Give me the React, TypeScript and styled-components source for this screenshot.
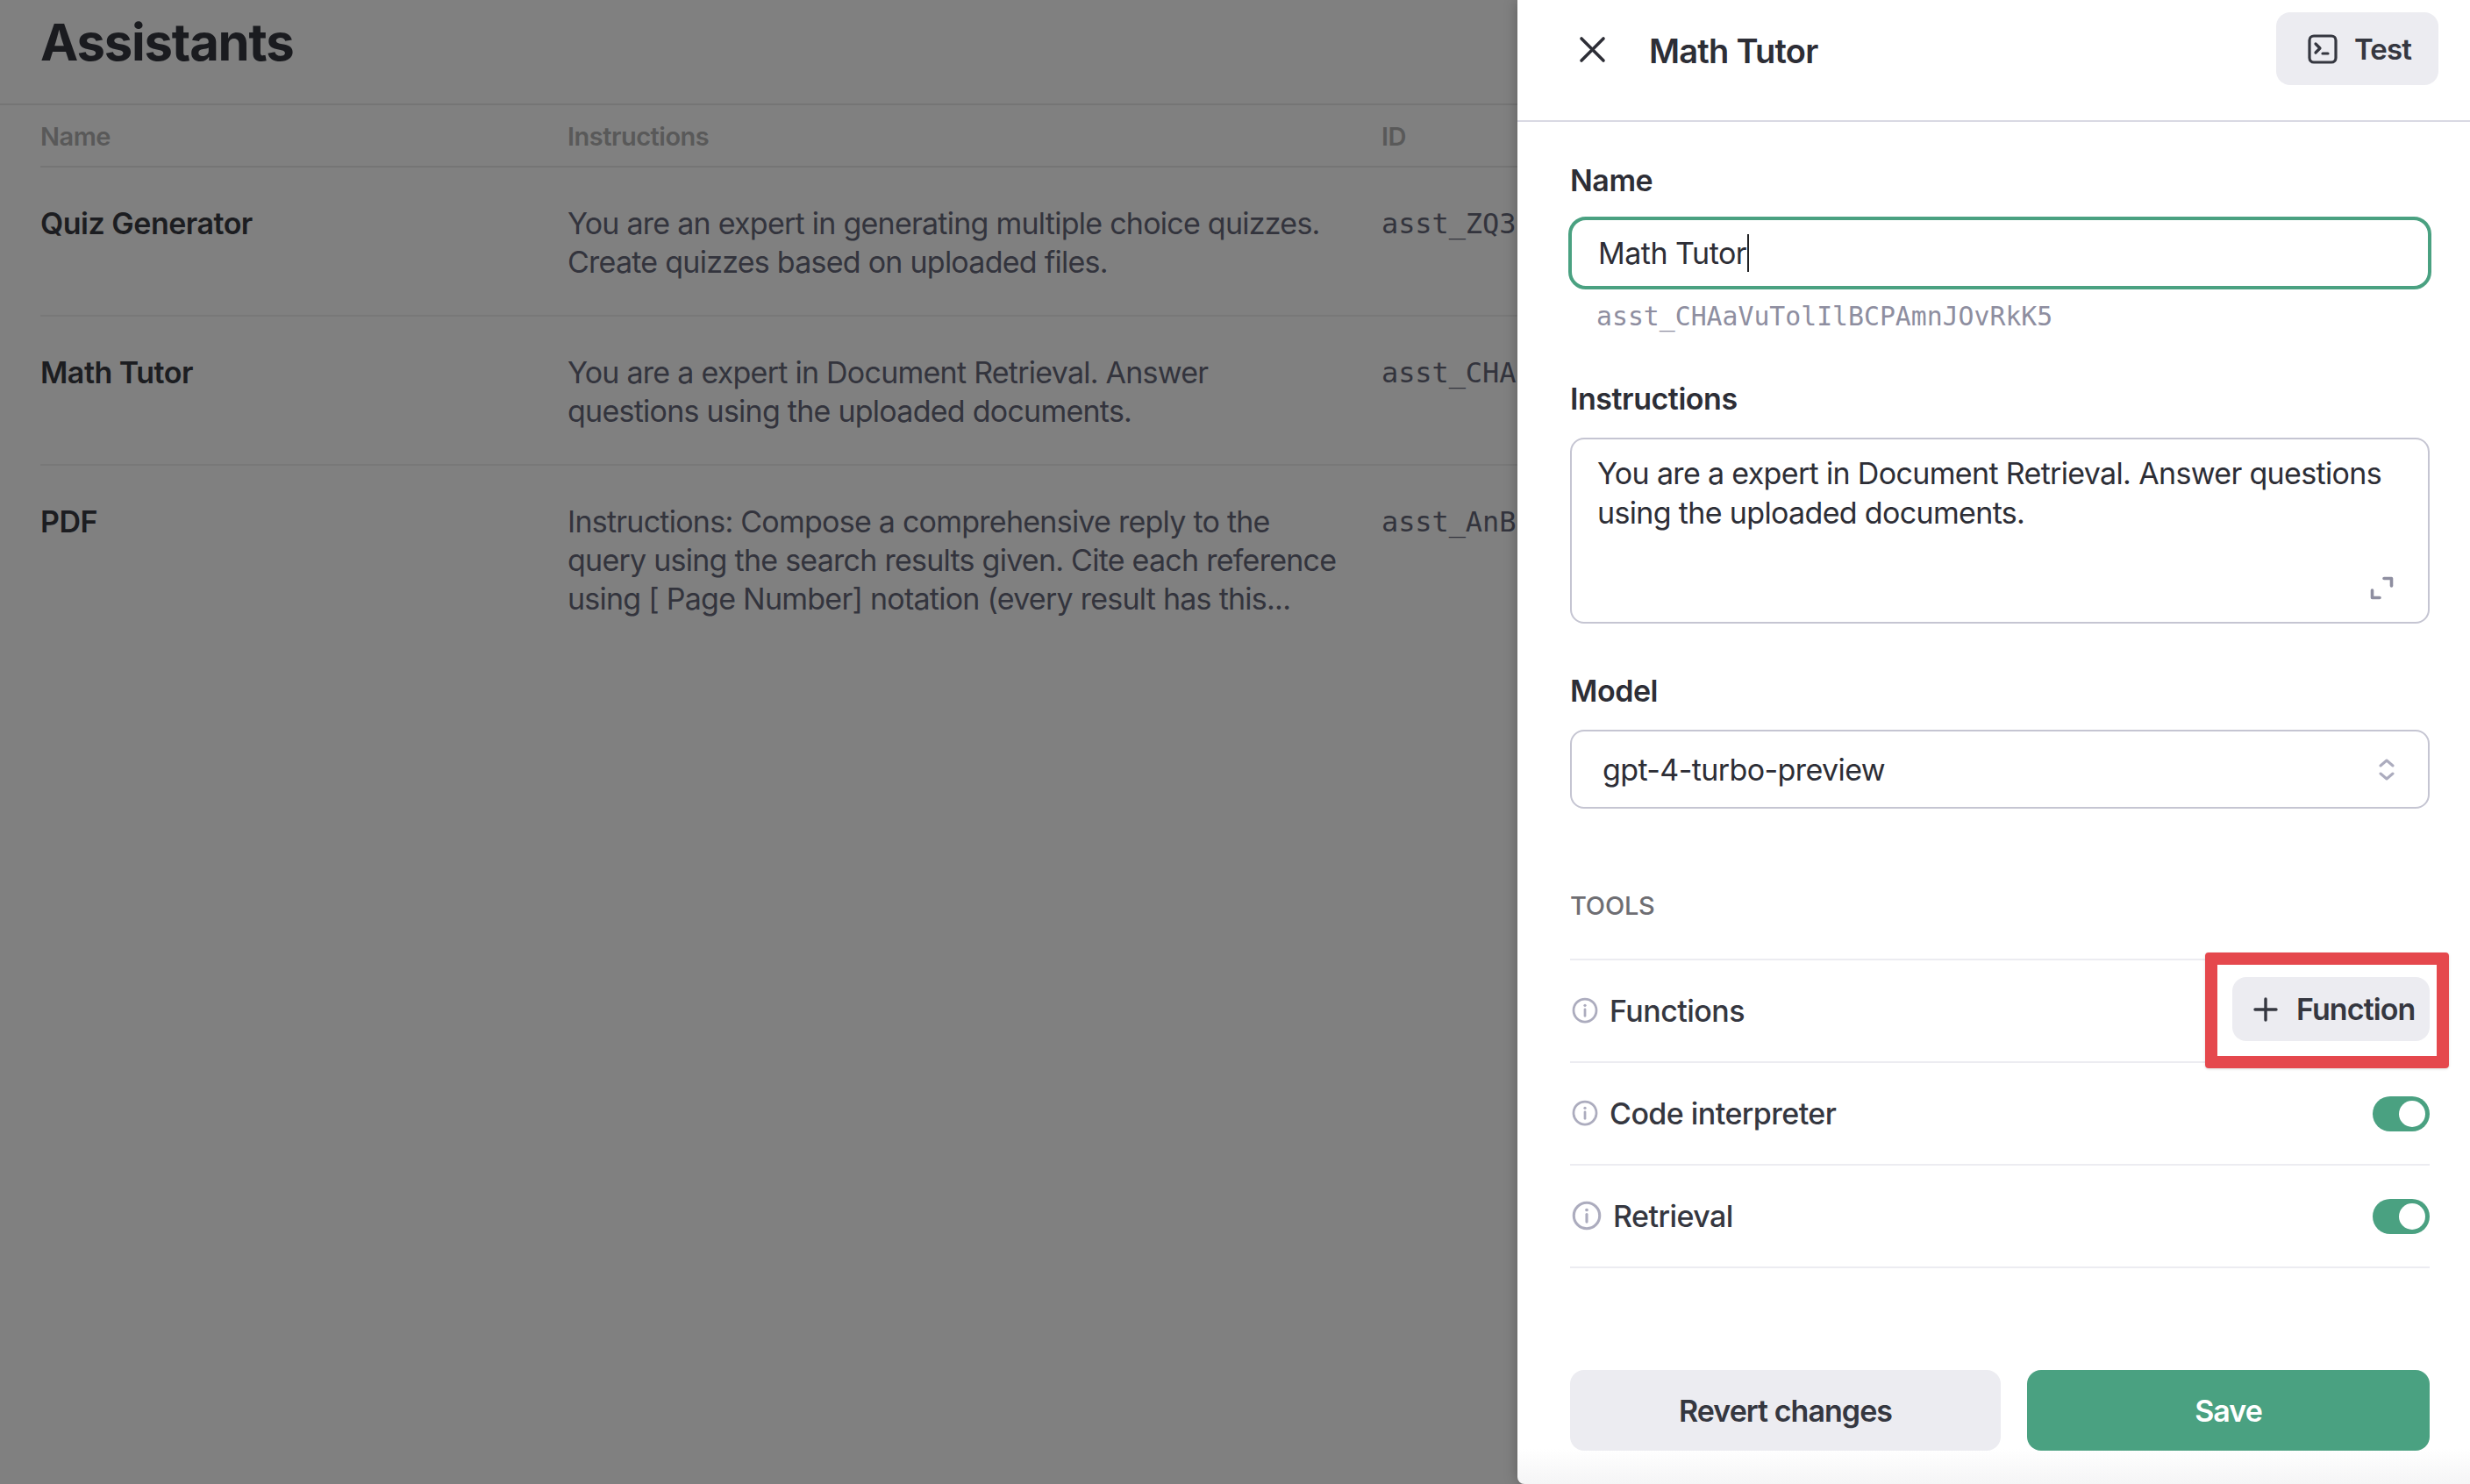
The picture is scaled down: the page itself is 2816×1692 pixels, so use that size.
import React from "react";
import styled, { createGlobalStyle } from "styled-components";

const Global = createGlobalStyle`
  html, body { margin: 0; padding: 0; background: #808080; }
  body { font-family: Inter, "Liberation Sans", sans-serif; -webkit-font-smoothing: antialiased; }
  * { box-sizing: border-box; }
`;

const Page = styled.div`
  width: 2816px;
  height: 1692px;
  display: grid;
  grid-template-columns: 1730px 1086px;
  overflow: hidden;
  background: #808080;
`;

const Main = styled.main`
  min-width: 0;
  overflow: hidden;
`;

const TitleBar = styled.header`
  height: 120px;
  padding: 12px 46px 0;
  border-bottom: 2px solid #757575;
`;

const Title = styled.h1`
  margin: 0;
  font-size: 58px;
  line-height: 72px;
  font-weight: 700;
  letter-spacing: -1.2px;
  color: #1a1b1f;
`;

const Table = styled.div`
  padding: 0 0 0 46px;
`;

const Row = styled.div<{ $head?: boolean; $last?: boolean }>`
  display: grid;
  grid-template-columns: 601px 928px 1fr;
  height: ${(p) => (p.$head ? "71px" : "170px")};
  padding-top: ${(p) => (p.$head ? "16px" : "42px")};
  border-bottom: ${(p) => (p.$last ? "none" : p.$head ? "2px solid #757575" : "2px solid #787878")};
`;

const HeadCell = styled.div`
  font-size: 29px;
  line-height: 40px;
  font-weight: 600;
  letter-spacing: -0.5px;
  color: #595959;
`;

const NameCell = styled.div`
  font-size: 34px;
  line-height: 44px;
  font-weight: 600;
  letter-spacing: -0.5px;
  color: #1c1d21;
`;

const TextCell = styled.div`
  font-size: 34px;
  line-height: 44px;
  font-weight: 400;
  letter-spacing: -0.75px;
  color: #33343d;
  white-space: nowrap;
`;

const IdCell = styled.div`
  font-family: "DejaVu Sans Mono", "Liberation Mono", monospace;
  font-size: 32px;
  line-height: 44px;
  letter-spacing: -0.1px;
  color: #33343d;
  white-space: nowrap;
`;

const Panel = styled.aside`
  position: relative;
  display: flex;
  flex-direction: column;
  height: 1692px;
  background: linear-gradient(to bottom, #fff 0, #fff 1652px, #f5f5f6 1692px);
  border-bottom-left-radius: 8px;
  box-shadow: 0 0 16px rgba(0, 0, 0, 0.28);
`;

const PanelHeader = styled.header`
  flex: none;
  height: 139px;
  display: flex;
  align-items: flex-start;
  border-bottom: 2px solid #d9d9e3;
  padding: 14px 36px 0 70px;
`;

const CloseIcon = styled.svg`
  width: 31px;
  height: 31px;
  margin-top: 27px;
  color: #2d2e36;
`;

const PanelTitle = styled.div`
  margin: 22px 0 0 49px;
  flex: 1;
  font-size: 38px;
  line-height: 44px;
  font-weight: 600;
  letter-spacing: -0.75px;
  color: #2d2e36;
`;

const GrayButton = styled.button`
  display: flex;
  align-items: center;
  border: none;
  background: #ececf1;
  color: #353740;
  font-family: inherit;
  font-weight: 600;
  font-size: 34px;
  letter-spacing: -0.9px;
  border-radius: 16px;
  padding: 0;
`;

const TestButton = styled(GrayButton)`
  width: 185px;
  height: 83px;
  padding-left: 36px;
  gap: 19px;
  font-size: 33px;
`;

const Body = styled.div`
  flex: 1;
  display: flex;
  flex-direction: column;
  padding: 0 46px 38px 60px;
`;

const Label = styled.div<{ $mt: number }>`
  margin-top: ${(p) => p.$mt}px;
  height: 40px;
  font-size: 34px;
  line-height: 40px;
  font-weight: 600;
  letter-spacing: -0.45px;
  color: #2d2e36;
`;

const NameInput = styled.div`
  margin: 21px -2px 0;
  height: 83px;
  display: flex;
  align-items: center;
  padding: 0 0 0 30px;
  border: 4px solid #4aa181;
  border-radius: 20px;
  font-size: 34px;
  letter-spacing: -0.5px;
  color: #2d2e36;
`;

const Caret = styled.span`
  display: inline-block;
  width: 2px;
  height: 43px;
  margin-left: 1px;
  background: #202123;
`;

const AssistantId = styled.div`
  margin-top: 11px;
  padding-left: 30px;
  font-family: "DejaVu Sans Mono", "Liberation Mono", monospace;
  font-size: 29.8px;
  line-height: 40px;
  color: #8e8ea0;
`;

const TextArea = styled.div`
  position: relative;
  margin-top: 24px;
  height: 212px;
  padding: 16px 20px 0 29px;
  border: 2px solid #c5c5d2;
  border-radius: 16px;
  font-size: 34px;
  line-height: 45px;
  letter-spacing: -0.66px;
  color: #2d2e36;
`;

const ExpandIcon = styled.svg`
  position: absolute;
  right: 39px;
  bottom: 25px;
  width: 27px;
  height: 27px;
  color: #8e8ea0;
`;

const Select = styled.div`
  margin-top: 24px;
  height: 90px;
  display: flex;
  align-items: center;
  justify-content: space-between;
  padding: 0 38px 0 35px;
  border: 2px solid #c5c5d2;
  border-radius: 16px;
  font-size: 34px;
  letter-spacing: -0.6px;
  color: #2d2e36;
`;

const ChevronIcon = styled.svg`
  width: 18px;
  height: 27px;
  color: #acacbe;
`;

const SectionTitle = styled.div`
  margin-top: 91px;
  height: 40px;
  font-size: 29px;
  line-height: 40px;
  font-weight: 500;
  letter-spacing: -0.2px;
  color: #6e6e73;
`;

const ToolList = styled.div`
  margin-top: 40px;
  border-top: 2px solid #ececf1;
`;

const ToolRow = styled.div`
  height: 117px;
  display: flex;
  align-items: center;
  border-bottom: 2px solid #ececf1;
`;

const InfoIcon = styled.svg<{ $big?: boolean }>`
  flex: none;
  width: ${(p) => (p.$big ? 34 : 30)}px;
  height: ${(p) => (p.$big ? 34 : 30)}px;
  margin: -2px 13px 0 2px;
  color: #acacbe;
`;

const ToolName = styled.div`
  flex: 1;
  font-size: 34px;
  font-weight: 500;
  letter-spacing: -0.55px;
  color: #353740;
`;

const FunctionButton = styled(GrayButton)`
  width: 225px;
  height: 73px;
  padding-left: 24px;
  gap: 21px;
  position: relative;
  top: -2px;
`;

const Switch = styled.div`
  width: 65px;
  height: 40px;
  padding: 5px;
  display: flex;
  justify-content: flex-end;
  border-radius: 20px;
  background: #4aa181;
`;

const Knob = styled.span`
  width: 30px;
  height: 30px;
  border-radius: 50%;
  background: #fff;
`;

const Highlight = styled.div`
  position: absolute;
  left: 784px;
  top: 1086px;
  width: 278px;
  height: 132px;
  border: 14px solid #e5484d;
  border-radius: 4px;
  box-shadow: 0 1px 3px rgba(0, 0, 0, 0.15);
  pointer-events: none;
`;

const Footer = styled.footer`
  margin-top: auto;
  display: grid;
  grid-template-columns: 491px 459px;
  column-gap: 30px;
`;

const FooterButton = styled.button<{ $primary?: boolean }>`
  height: 92px;
  border: none;
  border-radius: 16px;
  font-family: inherit;
  font-size: 34px;
  font-weight: 600;
  letter-spacing: -0.95px;
  background: ${(p) => (p.$primary ? "#4aa181" : "#ececf1")};
  color: ${(p) => (p.$primary ? "#fff" : "#353740")};
`;

const Info = ({ big }: { big?: boolean }) => (
  <InfoIcon $big={big} viewBox="0 0 24 24" fill="none" stroke="currentColor" strokeWidth="2.2">
    <circle cx="12" cy="12" r="10.4" />
    <path d="M12 11v6" strokeLinecap="round" />
    <circle cx="12" cy="7.4" r="1.3" fill="currentColor" stroke="none" />
  </InfoIcon>
);

const rows = [
  {
    name: "Quiz Generator",
    lines: ["You are an expert in generating multiple choice quizzes.", "Create quizzes based on uploaded files."],
    id: "asst_ZQ3",
  },
  {
    name: "Math Tutor",
    lines: ["You are a expert in Document Retrieval. Answer", "questions using the uploaded documents."],
    id: "asst_CHA",
  },
  {
    name: "PDF",
    lines: [
      "Instructions: Compose a comprehensive reply to the",
      "query using the search results given. Cite each reference",
      "using [ Page Number] notation (every result has this...",
    ],
    id: "asst_AnB",
  },
];

export default function App() {
  return (
    <Page>
      <Global />
      <Main>
        <TitleBar>
          <Title>Assistants</Title>
        </TitleBar>
        <Table>
          <Row $head>
            <HeadCell>Name</HeadCell>
            <HeadCell>Instructions</HeadCell>
            <HeadCell>ID</HeadCell>
          </Row>
          {rows.map((r, i) => (
            <Row key={r.name} $last={i === rows.length - 1}>
              <NameCell>{r.name}</NameCell>
              <TextCell>
                {r.lines.map((line) => (
                  <div key={line}>{line}</div>
                ))}
              </TextCell>
              <IdCell>{r.id}</IdCell>
            </Row>
          ))}
        </Table>
      </Main>
      <Panel>
        <PanelHeader>
          <CloseIcon viewBox="0 0 31 31" fill="none" stroke="currentColor" strokeWidth="3.6" strokeLinecap="round">
            <path d="M3 3l25 25M28 3L3 28" />
          </CloseIcon>
          <PanelTitle>Math Tutor</PanelTitle>
          <TestButton>
            <svg width="34" height="34" viewBox="0 0 34 34" fill="none" stroke="currentColor" strokeWidth="3.2" strokeLinecap="round" strokeLinejoin="round">
              <rect x="2" y="2" width="30" height="30" rx="5" />
              <path d="M9 11l5 5-5 5M17 22h6" />
            </svg>
            Test
          </TestButton>
        </PanelHeader>
        <Body>
          <Label $mt={47}>Name</Label>
          <NameInput>
            Math Tutor
            <Caret />
          </NameInput>
          <AssistantId>asst_CHAaVuTolIlBCPAmnJOvRkK5</AssistantId>
          <Label $mt={54}>Instructions</Label>
          <TextArea>
            You are a expert in Document Retrieval. Answer questions using the uploaded documents.
            <ExpandIcon viewBox="0 0 27 27" fill="none" stroke="currentColor" strokeWidth="3.6" strokeLinecap="round" strokeLinejoin="round">
              <path d="M16 2.5h8.5V11M2.5 16v8.5H11" />
            </ExpandIcon>
          </TextArea>
          <Label $mt={57}>Model</Label>
          <Select>
            gpt-4-turbo-preview
            <ChevronIcon viewBox="0 0 18 27" fill="none" stroke="currentColor" strokeWidth="3" strokeLinecap="round" strokeLinejoin="round">
              <path d="M2 9l7-6 7 6M2 18l7 6 7-6" />
            </ChevronIcon>
          </Select>
          <SectionTitle>TOOLS</SectionTitle>
          <ToolList>
            <ToolRow>
              <Info />
              <ToolName>Functions</ToolName>
              <FunctionButton>
                <svg width="28" height="28" viewBox="0 0 28 28" fill="none" stroke="currentColor" strokeWidth="3.4" strokeLinecap="round">
                  <path d="M14 2v24M2 14h24" />
                </svg>
                Function
              </FunctionButton>
            </ToolRow>
            <ToolRow>
              <Info />
              <ToolName>Code interpreter</ToolName>
              <Switch>
                <Knob />
              </Switch>
            </ToolRow>
            <ToolRow>
              <Info big />
              <ToolName>Retrieval</ToolName>
              <Switch>
                <Knob />
              </Switch>
            </ToolRow>
          </ToolList>
          <Footer>
            <FooterButton>Revert changes</FooterButton>
            <FooterButton $primary>Save</FooterButton>
          </Footer>
        </Body>
        <Highlight />
      </Panel>
    </Page>
  );
}
